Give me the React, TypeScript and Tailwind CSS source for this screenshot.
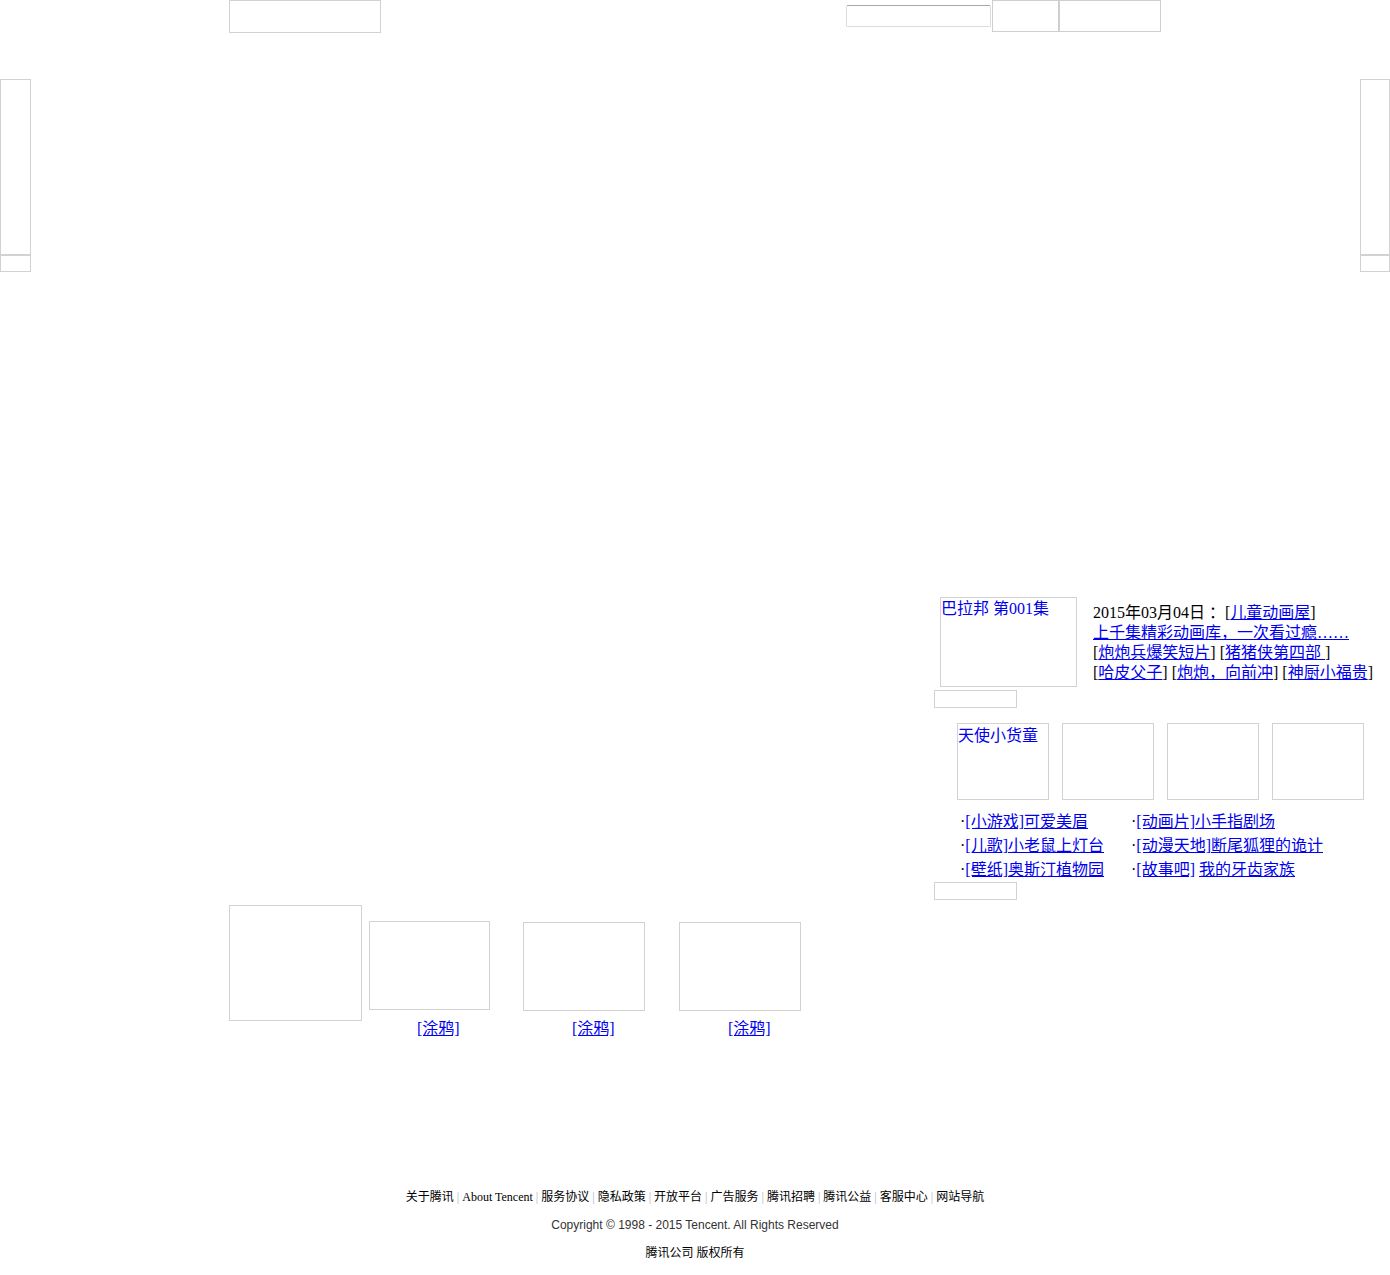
import React from "react";

const box = "border border-[#d2d2d2] box-border";

function Sep() {
  return <span className="text-[#aab4c8]"> | </span>;
}

export default function App() {
  const footerLinks = ["关于腾讯", "About Tencent", "服务协议", "隐私政策", "开放平台", "广告服务", "腾讯招聘", "腾讯公益", "客服中心", "网站导航"];
  return (
    <div className="relative min-h-[1275px] overflow-hidden bg-white text-black font-['Liberation_Serif','Noto_Sans_CJK_SC',serif]">
      {/* floating couplet ads */}
      <div className="absolute left-0 top-[79px] w-[31px]">
        <div className={`${box} h-[176px] w-[31px]`} />
        <div className={`${box} h-[17px] w-[31px]`} />
      </div>
      <div className="absolute right-0 top-[79px] w-[30px]">
        <div className={`${box} h-[176px] w-[30px]`} />
        <div className={`${box} h-[17px] w-[30px]`} />
      </div>

      <div className="mx-auto w-[932px]">
        {/* header */}
        <div className="flex h-[33px] items-start">
          <div className={`${box} h-[33px] w-[152px]`} />
          <div className="ml-auto mt-[5px] h-[22px] w-[145px] rounded-[2px] border border-[#dcdcdc] border-t-[#a8a8a8] box-border" />
          <div className="ml-[1px] h-[32px] w-[67px] border border-[#cfcfcf] box-border" />
          <div className="h-[32px] w-[102px] border border-[#cfcfcf] box-border" />
        </div>

        <div className="h-[564px]" />

        {/* right panel */}
        <div className="ml-[705px] w-[456px] text-[16px]">
          <div className="flex items-start">
            <div className={`${box} ml-[6px] h-[90px] w-[137px] pt-[1px] text-[#0000ee] leading-[20px]`}>巴拉邦 第001集</div>
            <div className="ml-[16px] mt-[6px] whitespace-nowrap leading-[20px]">
              <div>
                2015年03月04日 ：[<a className="text-[#0000ee] underline">儿童动画屋</a>]
              </div>
              <div>
                <a className="text-[#0000ee] underline">上千集精彩动画库，一次看过瘾……</a>
              </div>
              <div>
                [<a className="text-[#0000ee] underline">炮炮兵爆笑短片</a>] [<a className="text-[#0000ee] underline">猪猪侠第四部 </a>]
              </div>
              <div>
                [<a className="text-[#0000ee] underline">哈皮父子</a>] [<a className="text-[#0000ee] underline">炮炮，向前冲</a>] [<a className="text-[#0000ee] underline">神厨小福贵</a>]
              </div>
            </div>
          </div>
          <div className={`${box} mt-[3px] h-[18px] w-[83px]`} />

          <div className="ml-[23px] mt-[15px] flex gap-[13px]">
            <div className={`${box} h-[77px] w-[92px] pt-[1px] text-[#0000ee] leading-[22px]`}>天使小货童</div>
            <div className={`${box} h-[77px] w-[92px]`} />
            <div className={`${box} h-[77px] w-[92px]`} />
            <div className={`${box} h-[77px] w-[92px]`} />
          </div>

          <div className="ml-[26px] mt-[10px] grid grid-cols-[171px_1fr] leading-[24px] whitespace-nowrap">
            <div>·<a className="text-[#0000ee] underline">[小游戏]可爱美眉</a></div>
            <div>·<a className="text-[#0000ee] underline">[动画片]小手指剧场</a></div>
            <div>·<a className="text-[#0000ee] underline">[儿歌]小老鼠上灯台</a></div>
            <div>·<a className="text-[#0000ee] underline">[动漫天地]断尾狐狸的诡计</a></div>
            <div>·<a className="text-[#0000ee] underline">[壁纸]奥斯汀植物园</a></div>
            <div>·<a className="text-[#0000ee] underline">[故事吧]</a> <a className="text-[#0000ee] underline">我的牙齿家族</a></div>
          </div>
          <div className={`${box} mt-0 h-[18px] w-[83px]`} />
        </div>

        {/* bottom row */}
        <div className="mt-[5px] flex items-start text-[16px]">
          <div className={`${box} h-[116px] w-[133px]`} />
          <div className="ml-[7px] mt-[16px]">
            <div className={`${box} h-[89px] w-[121px]`} />
            <div className="ml-[48px] mt-[10px] leading-[18px]"><a className="text-[#0000ee] underline">[涂鸦]</a></div>
          </div>
          <div className="ml-[33px] mt-[17px]">
            <div className={`${box} h-[89px] w-[122px]`} />
            <div className="ml-[49px] mt-[9px] leading-[18px]"><a className="text-[#0000ee] underline">[涂鸦]</a></div>
          </div>
          <div className="ml-[34px] mt-[17px]">
            <div className={`${box} h-[89px] w-[122px]`} />
            <div className="ml-[49px] mt-[9px] leading-[18px]"><a className="text-[#0000ee] underline">[涂鸦]</a></div>
          </div>
        </div>
      </div>

      {/* footer */}
      <div className="mt-[145px] text-center text-[12px] leading-[28px]">
        <div>
          {footerLinks.map((l, i) => (
            <React.Fragment key={l}>
              {i > 0 && <Sep />}
              <span>{l}</span>
            </React.Fragment>
          ))}
        </div>
        <div className="font-['Liberation_Sans',Arial,sans-serif] text-[#333]">Copyright © 1998 - 2015 Tencent. All Rights Reserved</div>
        <div>腾讯公司 版权所有</div>
      </div>
    </div>
  );
}
